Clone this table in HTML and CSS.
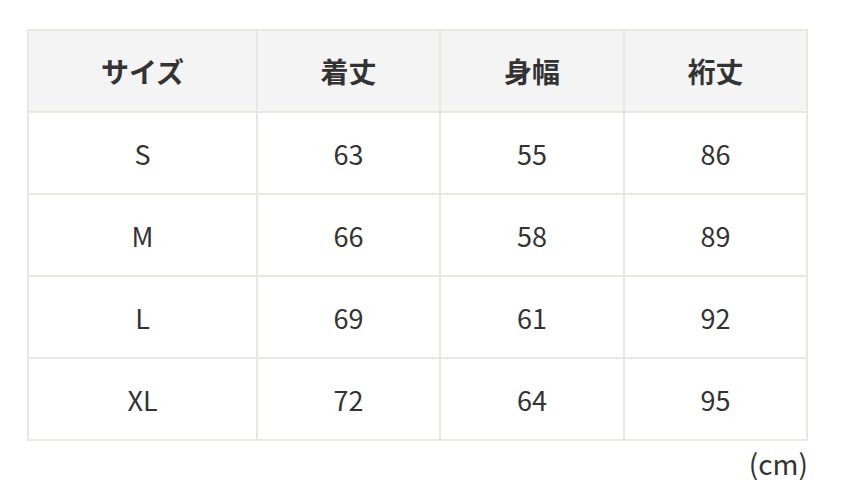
FILE: index.html
```html
<!DOCTYPE html>
<html lang="ja">
<head>
<meta charset="utf-8">
<link rel="stylesheet" href="styles.css">
</head>
<body>
<div class="wrap">
  <table class="size-table">
    <colgroup>
      <col class="c1"><col class="c2"><col class="c3"><col class="c4">
    </colgroup>
    <thead>
      <tr><th>サイズ</th><th>着丈</th><th>身幅</th><th>裄丈</th></tr>
    </thead>
    <tbody>
      <tr><td>S</td><td>63</td><td>55</td><td>86</td></tr>
      <tr><td>M</td><td>66</td><td>58</td><td>89</td></tr>
      <tr><td>L</td><td>69</td><td>61</td><td>92</td></tr>
      <tr><td>XL</td><td>72</td><td>64</td><td>95</td></tr>
    </tbody>
  </table>
  <div class="unit">(cm)</div>
</div>
</body>
</html>
```
FILE: styles.css
```css
html, body {
  margin: 0;
  padding: 0;
  background: #ffffff;
}
body {
  font-family: "Noto Sans CJK JP", "Noto Sans", sans-serif;
  color: #333333;
}
.wrap {
  padding: 29px 0 0 27px;
  width: 781px;
}
.size-table {
  border-collapse: separate;
  border-spacing: 0;
  table-layout: fixed;
  width: 781px;
  border-top: 2px solid #e8e8e2;
  border-left: 2px solid #e8e8e2;
}
.c1 { width: 229px; }
.c2 { width: 183px; }
.c3 { width: 184px; }
.c4 { width: 183px; }
.size-table th,
.size-table td {
  box-sizing: border-box;
  height: 82px;
  padding: 0;
  border-right: 2px solid #e8e8e2;
  border-bottom: 2px solid #e8e8e2;
  text-align: center;
  vertical-align: middle;
  font-size: 27px;
  line-height: 1;
}
.size-table th {
  background: #f4f4f4;
  font-weight: 700;
  font-size: 28px;
}
.size-table td {
  font-weight: 400;
}
.unit {
  text-align: right;
  font-size: 28px;
  line-height: 34px;
  margin-top: 5px;
  padding-right: 0;
}
```
